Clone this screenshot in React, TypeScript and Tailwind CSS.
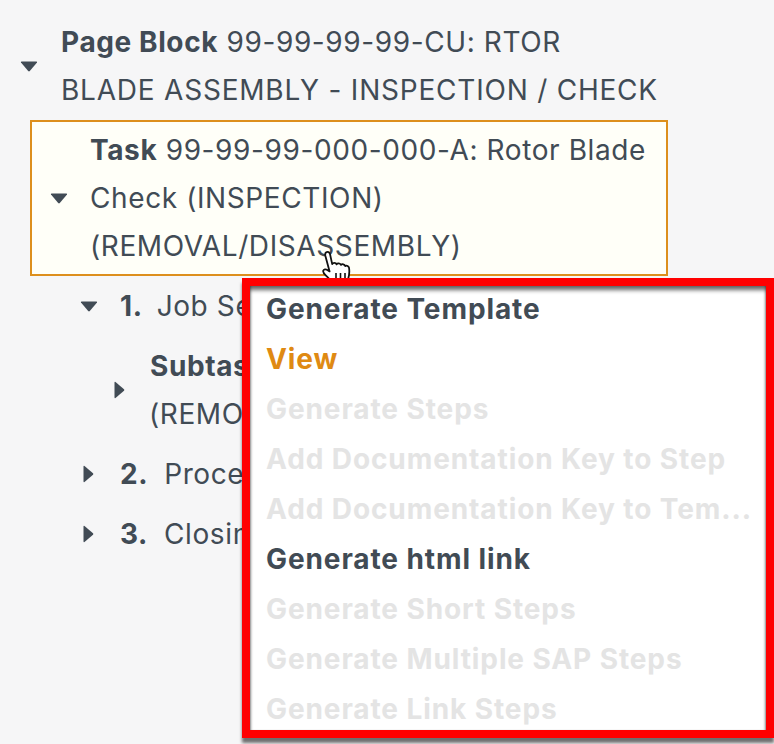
const font = { fontFamily: '"Inter", "Liberation Sans", sans-serif' }

function CaretDown() {
  return (
    <svg width="18" height="11" viewBox="0 0 18 11" className="shrink-0">
      <path d="M1 1.5 Q0.5 0.5 1.8 0.5 H16.2 Q17.5 0.5 17 1.5 L9.8 10 Q9 10.8 8.2 10 Z" fill="#414b55" />
    </svg>
  )
}

function CaretRight() {
  return (
    <svg width="11" height="18" viewBox="0 0 11 18" className="shrink-0">
      <path d="M1.5 1 Q0.5 0.5 0.5 1.8 V16.2 Q0.5 17.5 1.5 17 L10 9.8 Q10.8 9 10 8.2 Z" fill="#414b55" />
    </svg>
  )
}

function NumberedRow({ num, label, open }: { num: string; label: string; open?: boolean }) {
  return (
    <div className="flex h-[60px] items-center whitespace-nowrap pl-[80px]">
      <div className="flex w-[40px] shrink-0">
        {open ? <CaretDown /> : <span className="pl-[3px]"><CaretRight /></span>}
      </div>
      <span className="font-bold">{num}</span>
      <span className={open ? 'ml-[14px]' : 'ml-[16px]'}>{label}</span>
    </div>
  )
}

const menuItems = [
  { label: 'Generate Template', color: 'text-[#414b55]' },
  { label: 'View', color: 'text-[#df8a13]' },
  { label: 'Generate Steps', color: 'text-[#e4e4e4]' },
  { label: 'Add Documentation Key to Step', color: 'text-[#e4e4e4]' },
  { label: 'Add Documentation Key to Tem...', color: 'text-[#e4e4e4]' },
  { label: 'Generate html link', color: 'text-[#414b55]' },
  { label: 'Generate Short Steps', color: 'text-[#e4e4e4]' },
  { label: 'Generate Multiple SAP Steps', color: 'text-[#e4e4e4]' },
  { label: 'Generate Link Steps', color: 'text-[#e4e4e4]' },
]

function HandCursor() {
  return (
    <svg width="34" height="36" viewBox="0 0 34 36" className="absolute left-[320px] top-[250px]">
      <path
        d="M6 2.5c1.6-1.2 3.6-.3 4 1.6l2.2 10c.6-1.6 3.6-1.8 4.4.2.8-1.4 3.6-1.4 4.4.6 1-1.2 3.6-.8 4.2 1.2.8-.8 3.4-.6 3.8 1.6.6 3.4.2 7.6-.8 11-.6 2-1 3.6-1.4 5.3H13.4c-1.4-2.2-3.6-4.6-6.6-7.6-1.6-1.6-4.2-3.6-3.6-5.6.5-1.6 2.6-1.8 4.2-.8l2.2 1.4L5.4 6c-.3-1.4-.3-2.8.6-3.5Z"
        fill="#fff"
        stroke="#111"
        strokeWidth="1.8"
        strokeLinejoin="round"
      />
      <path d="M16 23v9M20.5 23v9M25 23v9" stroke="#111" strokeWidth="1.6" fill="none" />
    </svg>
  )
}

export default function App() {
  return (
    <div className="relative h-[744px] w-[774px] overflow-hidden bg-[#f6f6f7] text-[28px] leading-[48px] tracking-[0.6px] text-[#414b55]" style={font}>
      <div className="pt-[18px]">
        {/* page block */}
        <div className="flex items-center pl-[20px]">
          <div className="w-[41px] shrink-0"><CaretDown /></div>
          <p className="w-[680px]">
            <span className="font-bold">Page Block</span> 99-99-99-99-CU: RTOR
            <br />
            <span className="tracking-[0.78px]">BLADE ASSEMBLY - INSPECTION / CHECK</span>
          </p>
        </div>

        {/* selected task */}
        <div className="ml-[30px] mt-[6px] flex h-[156px] w-[638px] items-center border-2 border-[#dd8f1d] bg-[#fffff8] pl-[18px]">
          <div className="w-[40px] shrink-0"><CaretDown /></div>
          <p className="whitespace-nowrap">
            <span className="font-bold">Task</span> 99-99-99-000-000-A: Rotor Blade
            <br />
            Check (INSPECTION)
            <br />
            (REMOVAL/DISASSEMBLY)
          </p>
        </div>

        {/* children: only the part left of the menu shows */}
        <div className="w-[244px]">
          <NumberedRow num="1." label="Job Se" open />
          <div className="flex items-center whitespace-nowrap py-[6px] pl-[114px]">
            <div className="w-[36px] shrink-0"><CaretRight /></div>
            <p>
              <span className="font-bold">Subtas</span>
              <br />
              <span className="-ml-px">(REMO</span>
            </p>
          </div>
          <NumberedRow num="2." label="Proce" />
          <NumberedRow num="3." label="Closin" />
        </div>
      </div>

      <HandCursor />

      {/* context menu */}
      <div className="absolute left-[242px] top-[278px] h-[460px] w-[532px] border-[8px] border-[#ff0000] bg-white shadow-[0_5px_3px_rgba(0,0,0,0.55)]">
        <div className="h-full shadow-[inset_0_5px_4px_-1px_rgba(0,0,0,0.6),inset_-2px_0_2px_-1px_rgba(0,0,0,0.3),inset_2px_0_2px_-1px_rgba(0,0,0,0.3)]">
          {menuItems.map(item => (
            <div key={item.label} className={`h-[50px] whitespace-nowrap pl-[16px] text-[28px] font-bold leading-[47px] tracking-[0.9px] ${item.color}`}>
              {item.label}
            </div>
          ))}
        </div>
      </div>
    </div>
  )
}
